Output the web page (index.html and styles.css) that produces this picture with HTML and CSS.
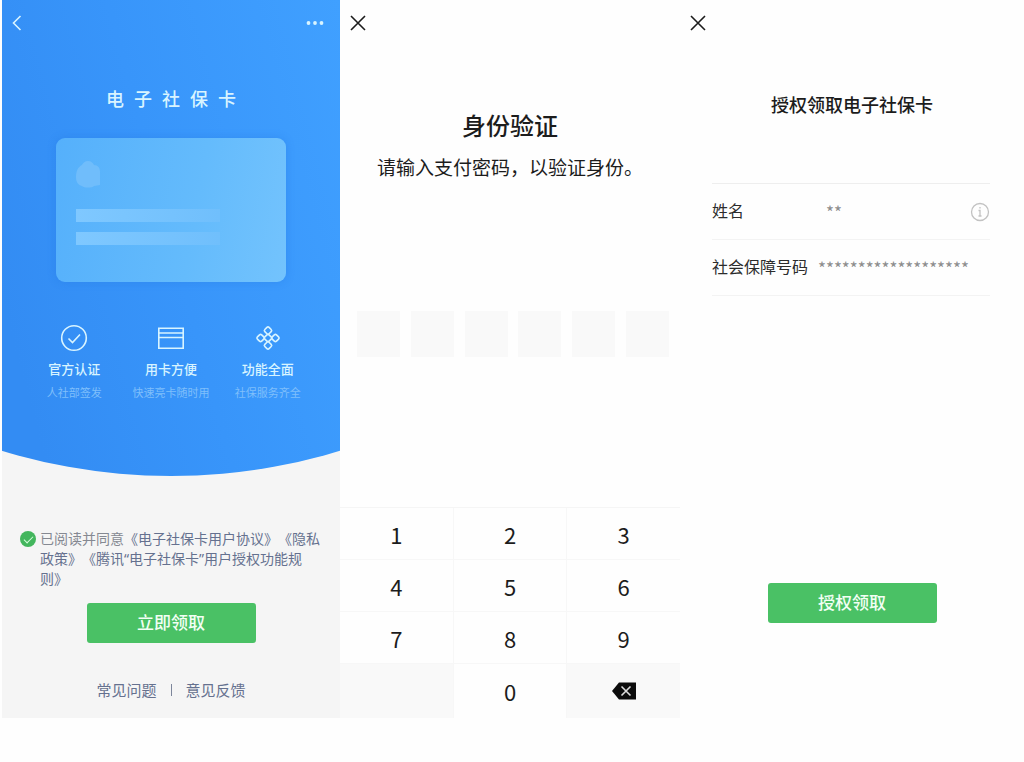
FILE: index.html
```html
<!DOCTYPE html>
<html lang="zh-CN">

<head>
    <meta charset="UTF-8">
    <meta name="viewport" content="width=device-width, initial-scale=1.0">
    <title>电子社保卡</title>
    <link rel="stylesheet" href="styles.css">
</head>

<body>

    <main class="screens">

        <section class="screen intro">
            <div class="hero">
                <div class="topbar">
                    <button type="button" class="icon-btn" aria-label="返回">
                        <svg width="10" height="16" viewBox="0 0 10 16"><path d="M8.5 1 1.5 8l7 7" /></svg>
                    </button>
                    <button type="button" class="icon-btn" aria-label="更多">
                        <svg class="dots" width="18" height="16" viewBox="0 0 18 16">
                            <circle cx="2.5" cy="8" r="1.9" />
                            <circle cx="9" cy="8" r="1.9" />
                            <circle cx="15.5" cy="8" r="1.9" />
                        </svg>
                    </button>
                </div>
                <h1>电子社保卡</h1>
                <div class="card">
                    <svg class="card-logo" width="25" height="27" viewBox="0 0 25 27">
                        <path d="M12 0c3 0 5 2 6 4 4 0 6 3 6 7v13l-6 1c-2 2-10 2-12 0-4-1-6-4-6-9 0-6 2-10 6-12 1-2 3-4 6-4z" />
                    </svg>
                    <div class="card-line"></div>
                    <div class="card-line"></div>
                </div>
                <ul class="features">
                    <li>
                        <svg width="28" height="28" viewBox="0 0 28 28">
                            <circle cx="14" cy="14" r="12.3" />
                            <path d="m8.5 14.5 4 4 7.5-8" />
                        </svg>
                        <strong>官方认证</strong>
                        <span>人社部签发</span>
                    </li>
                    <li>
                        <svg width="28" height="28" viewBox="0 0 28 28">
                            <path d="M1.8 4.2h24.4v20H1.8zM1.8 9h24.4M1.8 13.5h24.4" />
                        </svg>
                        <strong>用卡方便</strong>
                        <span>快速亮卡随时用</span>
                    </li>
                    <li>
                        <svg width="28" height="28" viewBox="0 0 28 28">
                            <rect x="-3" y="-3" width="6" height="6" rx="1.5" transform="translate(14 6.6) rotate(45)" />
                            <rect x="-3" y="-3" width="6" height="6" rx="1.5" transform="translate(6.6 14) rotate(45)" />
                            <rect x="-3" y="-3" width="6" height="6" rx="1.5" transform="translate(21.4 14) rotate(45)" />
                            <rect x="-3" y="-3" width="6" height="6" rx="1.5" transform="translate(14 21.4) rotate(45)" />
                            <rect x="-3" y="-3" width="6" height="6" rx="1.5" transform="translate(14 14) rotate(45)" />
                        </svg>
                        <strong>功能全面</strong>
                        <span>社保服务齐全</span>
                    </li>
                </ul>
            </div>

            <div class="agreement">
                <input type="checkbox" id="agree" checked>
                <label for="agree">已阅读并同意<a href="#">《电子社保卡用户协议》</a><a href="#">《隐私政策》</a><a href="#">《腾讯“电子社保卡”用户授权功能规则》</a></label>
            </div>
            <button type="button" class="primary">立即领取</button>
            <div class="links">
                <a href="#">常见问题</a>
                <span></span>
                <a href="#">意见反馈</a>
            </div>
        </section>

        <section class="screen verify">
            <div class="topbar">
                <button type="button" class="icon-btn" aria-label="关闭">
                    <svg width="16" height="16" viewBox="0 0 16 16"><path d="m1 1 14 14M15 1 1 15" /></svg>
                </button>
            </div>
            <h2>身份验证</h2>
            <p>请输入支付密码，以验证身份。</p>
            <div class="pins">
                <input type="password" maxlength="1" aria-label="第1位">
                <input type="password" maxlength="1" aria-label="第2位">
                <input type="password" maxlength="1" aria-label="第3位">
                <input type="password" maxlength="1" aria-label="第4位">
                <input type="password" maxlength="1" aria-label="第5位">
                <input type="password" maxlength="1" aria-label="第6位">
            </div>
            <div class="keypad">
                <button type="button">1</button>
                <button type="button">2</button>
                <button type="button">3</button>
                <button type="button">4</button>
                <button type="button">5</button>
                <button type="button">6</button>
                <button type="button">7</button>
                <button type="button">8</button>
                <button type="button">9</button>
                <div class="blank"></div>
                <button type="button">0</button>
                <button type="button" class="blank" aria-label="删除">
                    <svg width="24" height="18" viewBox="0 0 24 18">
                        <path class="key" d="M7 .5h17v17H7L0 9z" />
                        <path class="cross" d="m9.5 4.5 9 9M18.5 4.5l-9 9" />
                    </svg>
                </button>
            </div>
        </section>

        <section class="screen grant">
            <div class="topbar">
                <button type="button" class="icon-btn" aria-label="关闭">
                    <svg width="16" height="16" viewBox="0 0 16 16"><path d="m1 1 14 14M15 1 1 15" /></svg>
                </button>
            </div>
            <h2>授权领取电子社保卡</h2>
            <dl>
                <div>
                    <dt>姓名</dt>
                    <dd class="name">**</dd>
                    <dd class="info">
                        <svg width="20" height="20" viewBox="0 0 20 20">
                            <circle cx="10" cy="10" r="8.5" />
                            <path d="M10 5v1.5M8.5 8.5H10V14M8.5 14h3" />
                        </svg>
                    </dd>
                </div>
                <div>
                    <dt>社会保障号码</dt>
                    <dd>*******************</dd>
                </div>
            </dl>
            <button type="button" class="primary">授权领取</button>
        </section>

    </main>

</body>

</html>
```

FILE: styles.css
```css
* {
    box-sizing: border-box;
}

body {
    margin: 0;
    background-color: #fefefe;
    color: #1c1c1c;
    font-family: "Noto Sans CJK SC", sans-serif;
}

h1, h2, p, ul, dl, dd {
    margin: 0;
    padding: 0;
}

button {
    border: none;
    padding: 0;
    font-family: inherit;
    color: inherit;
    cursor: pointer;
}

a {
    color: #65718f;
    text-decoration: none;
}

svg {
    display: block;
    fill: none;
    stroke: currentColor;
    stroke-width: 1.6;
}

.screens {
    display: grid;
    grid-template-columns: 340fr 340fr 344fr;
    min-height: calc(100vh - 44px);
}

.screen {
    display: flex;
    flex-direction: column;
}

.topbar {
    display: flex;
    justify-content: space-between;
    align-items: center;
    height: 46px;
    padding: 0 10px;
}

.icon-btn {
    background: none;
}

.primary {
    align-self: center;
    width: 169px;
    height: 40px;
    padding-bottom: 4px;
    border-radius: 3px;
    background-color: #4ac165;
    color: #f2fff4;
    font-size: 17px;
    font-weight: 500;
}

/* intro */
.intro {
    margin-left: 2px;
    background-color: #f5f5f5;
}

.hero {
    height: 476px;
    background: linear-gradient(75deg, #338cf3 10%, #3895fa 50%, #40a0ff);
    clip-path: ellipse(156% 100% at 50% 0);
    color: #d8f4ff;
}

.hero .topbar {
    padding: 0 16px 0 10px;
}

.dots {
    fill: currentColor;
    stroke: none;
}

h1 {
    margin-top: 39px;
    padding-left: 10px;
    text-align: center;
    font-size: 18px;
    line-height: 26px;
    font-weight: 500;
    letter-spacing: 10px;
}

.card {
    width: 230px;
    height: 144px;
    margin: 27px auto 0;
    padding: 23px 20px;
    border-radius: 9px;
    background: linear-gradient(100deg, #55b0fb, #64bbfc 60%, #73c3fd);
    box-shadow: 0 0 8px rgba(30, 110, 220, 0.3);
}

.card-logo {
    margin-bottom: 21px;
    fill: #70bdfb;
    stroke: none;
}

.card-line {
    width: 144px;
    height: 13px;
    margin-bottom: 10px;
    background: linear-gradient(90deg, #7fc8ff, #70bffc);
}

.features {
    display: grid;
    grid-template-columns: repeat(3, 1fr);
    margin: 42px 24px 0;
    list-style: none;
}

.features li {
    display: flex;
    flex-direction: column;
    align-items: center;
    white-space: nowrap;
}

.features strong {
    margin-top: 7px;
    font-size: 13px;
    line-height: 20px;
    font-weight: 500;
}

.features span {
    margin-top: 4px;
    font-size: 11px;
    line-height: 18px;
    color: #7fbffb;
}

.agreement {
    display: flex;
    gap: 4px;
    margin: 53px 17px 0 18px;
    color: #858992;
    font-family: "Noto Sans", "Noto Sans CJK SC", sans-serif;
    font-size: 14px;
    line-height: 20px;
}

.agreement label {
    width: 282px;
    text-spacing-trim: space-all;
}

.agreement input {
    appearance: none;
    flex: none;
    position: relative;
    width: 16px;
    height: 16px;
    margin: 2px 0 0;
    border-radius: 50%;
    border: 1px solid #b5b5b5;
}

.agreement input:checked {
    border: none;
    background-color: #43b65d;
}

.agreement input:checked::after {
    content: "";
    position: absolute;
    left: 4px;
    top: 5px;
    width: 8px;
    height: 4px;
    border-left: 1px solid #d5ffdc;
    border-bottom: 1px solid #d5ffdc;
    transform: rotate(-45deg);
}

.intro .primary {
    margin-top: 14px;
}

.links {
    display: flex;
    justify-content: center;
    align-items: center;
    gap: 14px;
    margin-top: 35px;
    font-size: 15px;
    line-height: 24px;
}

.links span {
    width: 1px;
    height: 12px;
    background-color: #7d869b;
}

/* verify */
.verify h2 {
    margin-top: 61px;
    text-align: center;
    font-size: 24px;
    line-height: 36px;
    font-weight: 500;
}

.verify p {
    margin-top: 9px;
    text-align: center;
    font-size: 19px;
    line-height: 30px;
}

.pins {
    display: flex;
    justify-content: space-between;
    margin: 129px 11px 0 17px;
}

.pins input {
    width: 43px;
    height: 46px;
    border: none;
    background-color: #f9f9f9;
    text-align: center;
    font-size: 24px;
}

.keypad {
    display: grid;
    grid-template-columns: repeat(3, 1fr);
    grid-template-rows: repeat(3, 51px) 54px;
    gap: 1px;
    margin-top: auto;
    border-top: 1px solid #f5f5f5;
    background-color: #f7f7f7;
}

.keypad button {
    display: flex;
    justify-content: center;
    align-items: center;
    background-color: #fefefe;
    font-size: 22px;
}

.keypad .blank {
    background-color: #f9f9f9;
}

.key {
    fill: #0c0c0c;
    stroke: none;
}

.cross {
    stroke: #dcdcdc;
}

/* grant */
.grant h2 {
    margin-top: 44px;
    text-align: center;
    font-size: 18px;
    line-height: 28px;
    font-weight: 500;
}

dl {
    margin: 65px 34px 0 32px;
    border-top: 1px solid #eeeeee;
}

dl div {
    display: flex;
    align-items: center;
    height: 56px;
    border-bottom: 1px solid #f3f3f3;
    font-size: 16px;
}

dt {
    width: 106px;
    padding-bottom: 3px;
    color: #2c2c2c;
}

dd {
    color: #8d8d8d;
    font-size: 17px;
}

dd.name {
    padding-left: 8px;
}

.info {
    margin-left: auto;
    color: #c2c2c2;
}

.info svg {
    stroke-width: 1.3;
}

.grant .primary {
    margin-top: 287px;
}
```
